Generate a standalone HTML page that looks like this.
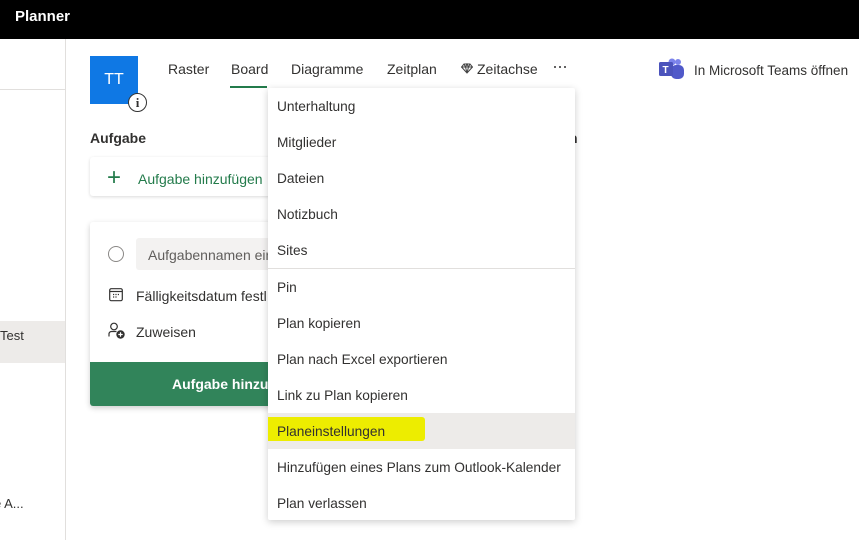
<!DOCTYPE html><html><head><style>
body{margin:0;width:859px;height:540px;position:relative;overflow:hidden;font-family:"Liberation Sans",sans-serif;background:#fff;color:#323130}
.a{position:absolute}
.top{left:0;top:0;width:859px;height:39px;background:#000;color:#fff;font-weight:bold;font-size:15px}
.menu{left:268px;top:88px;width:307px;height:432px;background:#fff;box-shadow:0 2px 8px rgba(0,0,0,.2);border-radius:2px}
.it{position:absolute;left:0;width:307px;height:36px;line-height:37px;font-size:13.7px;padding-left:9px;box-sizing:border-box}
.nav{font-size:14px;top:61px}
</style></head><body>
<div class="a top"><span class="a" style="left:15px;top:8px">Planner</span></div>
<div class="a" style="left:65px;top:39px;width:1px;height:501px;background:#e1dfdd"></div>
<div class="a" style="left:0;top:89px;width:65px;height:1px;background:#e1dfdd"></div>
<div class="a" style="left:0;top:321px;width:65px;height:42px;background:#edebe9"></div>
<div class="a" style="left:0;top:328px;font-size:13px">Test</div>
<div class="a" style="left:-6px;top:496px;font-size:13px">e A...</div>
<div class="a" style="left:90px;top:56px;width:48px;height:48px;background:#0f78e4;color:#fff;font-size:16px;text-align:center;line-height:48px">TT</div>
<div class="a" style="left:128px;top:93px;width:17px;height:17px;border:1.5px solid #333;border-radius:50%;background:#fff;text-align:center;font-size:13px;line-height:17px;font-weight:bold;font-family:'Liberation Serif',serif">i</div>
<div class="a nav" style="left:168px">Raster</div>
<div class="a nav" style="left:231px">Board</div>
<div class="a" style="left:230px;top:86px;width:37px;height:2px;background:#237b4b"></div>
<div class="a nav" style="left:291px">Diagramme</div>
<div class="a nav" style="left:387px">Zeitplan</div>
<svg class="a" style="left:461px;top:63px" width="12" height="11" viewBox="0 0 12 11"><path d="M3 1h6l2.5 3L6 10 .5 4z M.5 4h11 M4.5 4L6 10l1.5-6 M3 1l1.5 3L6 1l1.5 3L9 1" fill="none" stroke="#444" stroke-width="1"/></svg>
<div class="a nav" style="left:477px">Zeitachse</div>
<div class="a" style="left:554px;top:66px;width:2px;height:2px;background:#323130;border-radius:50%;box-shadow:5px 0 #323130,10px 0 #323130"></div>
<div class="a" style="left:659px;top:58px;width:26px;height:22px">
<svg width="26" height="22"><circle cx="19" cy="4" r="3" fill="#7b83eb"/><rect x="12" y="7" width="13" height="14" rx="5" fill="#5059c9"/><circle cx="13" cy="4" r="3.5" fill="#7b83eb"/><rect x="0" y="4" width="14" height="14" rx="1.5" fill="#4b53bc"/><text x="3.5" y="15" font-size="10" font-weight="bold" fill="#fff" font-family="Liberation Sans">T</text></svg></div>
<div class="a" style="left:694px;top:63px;font-size:13.5px">In Microsoft Teams öffnen</div>
<div class="a" style="left:90px;top:130px;font-size:14px;font-weight:bold">Aufgabe</div>
<div class="a" style="left:569px;top:130px;font-size:14px;font-weight:bold">n</div>
<div class="a" style="left:90px;top:157px;width:200px;height:39px;box-shadow:0 1px 3px rgba(0,0,0,.15);border-radius:3px"></div>
<div class="a" style="left:107px;top:164px;font-size:24px;color:#237b4b;font-weight:200">+</div>
<div class="a" style="left:138px;top:171px;font-size:14px;color:#237b4b">Aufgabe hinzufügen</div>
<div class="a" style="left:90px;top:222px;width:200px;height:184px;box-shadow:0 2px 6px rgba(0,0,0,.2);border-radius:3px;background:#fff"></div>
<div class="a" style="left:108px;top:246px;width:14px;height:14px;border:1px solid #8a8886;border-radius:50%"></div>
<div class="a" style="left:136px;top:238px;width:150px;height:32px;background:#f3f2f1;border-radius:3px"></div>
<div class="a" style="left:148px;top:247px;font-size:14px;color:#605e5c">Aufgabennamen ein</div>
<svg class="a" style="left:109px;top:288px" width="14" height="14" viewBox="0 0 14 14"><rect x=".7" y=".7" width="12.6" height="12" rx="1.5" fill="none" stroke="#323130" stroke-width="1.2"/><path d="M.7 3.5h12.6" stroke="#323130" stroke-width="1.2"/><path d="M4 6.5h1.2M6.4 6.5h1.2M8.8 6.5h1.2M4 9h1.2M6.4 9h1.2" stroke="#323130" stroke-width="1.2"/></svg>
<div class="a" style="left:136px;top:288px;font-size:14px;white-space:nowrap">Fälligkeitsdatum festl</div>
<svg class="a" style="left:108px;top:322px" width="18" height="18" viewBox="0 0 18 18"><circle cx="6" cy="4.5" r="3.3" fill="none" stroke="#323130" stroke-width="1.2"/><path d="M1 14.5v-2.5a2.5 2.5 0 0 1 2.5-2.5h5" fill="none" stroke="#323130" stroke-width="1.2"/><circle cx="12.5" cy="12.5" r="4.2" fill="#323130"/><path d="M12.5 10.3v4.4M10.3 12.5h4.4" stroke="#fff" stroke-width="1.2"/></svg>
<div class="a" style="left:136px;top:324px;font-size:14px">Zuweisen</div>
<div class="a" style="left:90px;top:362px;width:200px;height:44px;background:#31845a;border-radius:0 0 3px 3px"></div>
<div class="a" style="left:172px;top:376px;font-size:14px;color:#fff;font-weight:bold">Aufgabe hinzufü</div>
<div class="a menu">
<div class="it" style="top:0">Unterhaltung</div>
<div class="it" style="top:36px">Mitglieder</div>
<div class="it" style="top:72px">Dateien</div>
<div class="it" style="top:108px">Notizbuch</div>
<div class="it" style="top:144px">Sites</div>
<div class="a" style="left:0;top:180px;width:307px;height:1px;background:#e1dfdd"></div>
<div class="it" style="top:181px">Pin</div>
<div class="it" style="top:217px">Plan kopieren</div>
<div class="it" style="top:253px">Plan nach Excel exportieren</div>
<div class="it" style="top:289px">Link zu Plan kopieren</div>
<div class="it" style="top:325px;background:#edebe9"><div class="a" style="left:0;top:4px;width:157px;height:24px;background:#eded00;border-radius:0 3px 3px 0"></div><span style="position:relative">Planeinstellungen</span></div>
<div class="it" style="top:361px">Hinzufügen eines Plans zum Outlook-Kalender</div>
<div class="it" style="top:397px">Plan verlassen</div>
</div>
</body></html>
